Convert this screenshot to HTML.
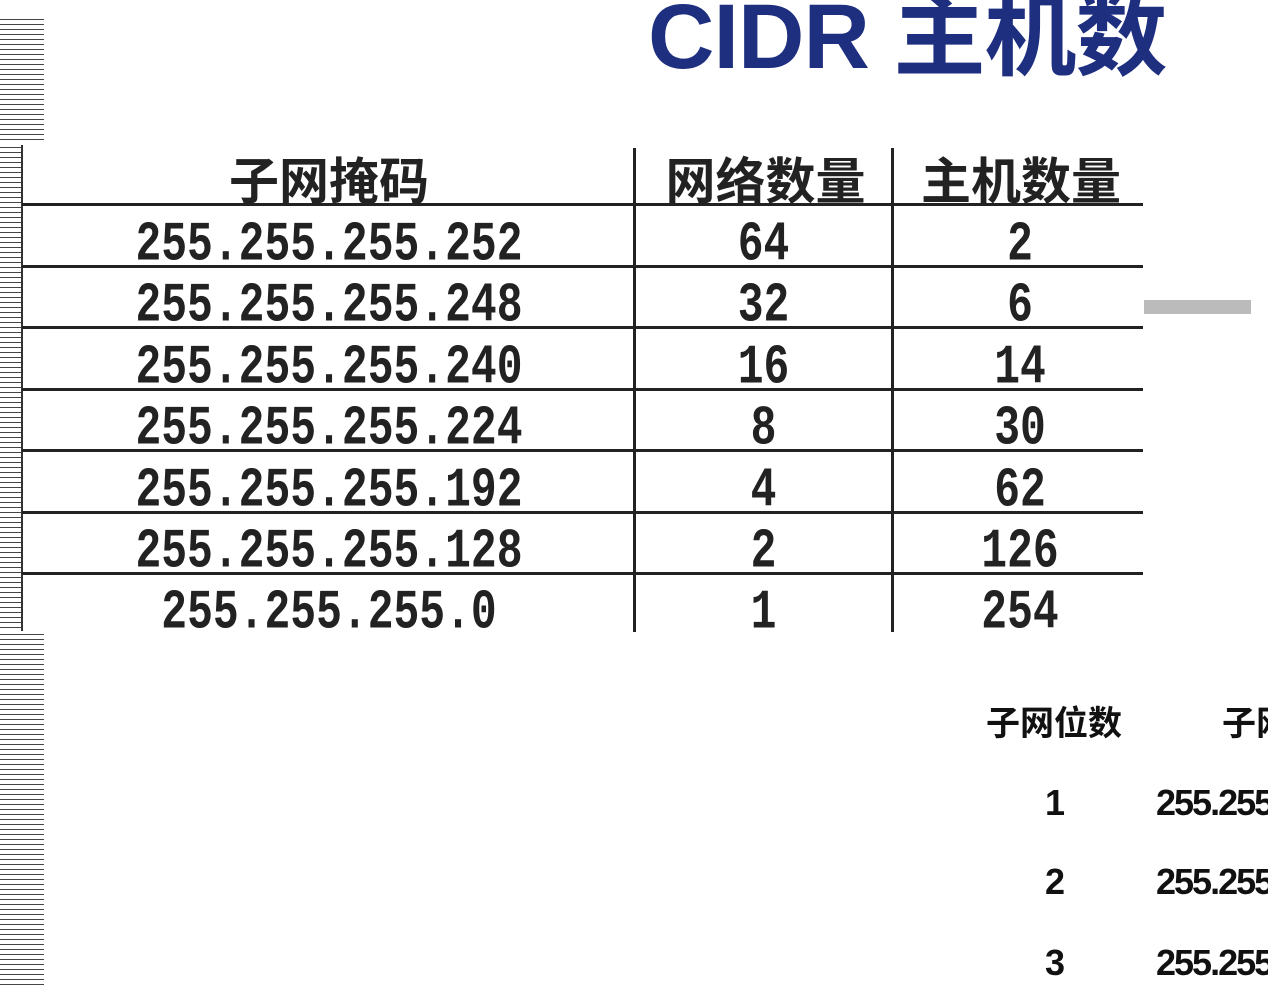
<!DOCTYPE html><html><head><meta charset="utf-8"><style>
body{margin:0;width:1280px;height:987px;background:#fff;position:relative;overflow:hidden;font-family:"Liberation Sans","Noto Sans CJK SC",sans-serif}
.a{position:absolute}
.st{background:repeating-linear-gradient(#fff 0 2px,#444 2px 3.2px,#fff 3.2px 5px)}
.hl{position:absolute;left:22px;width:1121px;height:3px;background:#222}
.vl{position:absolute;width:3px;background:#222;top:148px;height:484px}
.n{position:absolute;font-family:"Liberation Mono","DejaVu Sans Mono",monospace;font-weight:bold;font-size:43px;color:#222;transform:scaleY(1.3);transform-origin:center;text-align:center;line-height:50px;height:50px}
.h{position:absolute;font-family:"Noto Sans CJK SC",sans-serif;font-weight:bold;font-size:50px;color:#222;text-align:center;line-height:60px;top:148px}
.b{position:absolute;font-weight:bold;font-size:36px;color:#111;letter-spacing:-2px;white-space:nowrap}
</style></head><body>
<div class="a st" style="left:0;top:17px;width:44px;height:124px"></div>
<div class="a st" style="left:0;top:145px;width:21px;height:486px"></div>
<div class="a st" style="left:0;top:632px;width:44px;height:355px"></div>
<div class="a" style="left:21px;top:145px;width:2px;height:486px;background:#333"></div>
<div class="a" style="left:648px;top:-38px;font-size:92px;color:#1f2f80;white-space:nowrap;font-family:'Liberation Sans','Noto Sans CJK SC',sans-serif;font-weight:bold;letter-spacing:-1px">CIDR 主机数</div>
<div class="h" style="left:23px;width:612px">子网掩码</div>
<div class="h" style="left:638px;width:255px">网络数量</div>
<div class="h" style="left:896px;width:250px">主机数量</div>
<div class="hl" style="top:203px"></div><div class="hl" style="top:265px"></div><div class="hl" style="top:326px"></div><div class="hl" style="top:388px"></div><div class="hl" style="top:449px"></div><div class="hl" style="top:511px"></div><div class="hl" style="top:572px"></div>
<div class="vl" style="left:633px"></div><div class="vl" style="left:891px"></div>
<div class="a" style="left:1144px;top:300px;width:107px;height:14px;background:#bbb"></div>
<div class="n" style="left:23px;width:612px;top:220px">255.255.255.252</div>
<div class="n" style="left:23px;width:612px;top:281px">255.255.255.248</div>
<div class="n" style="left:23px;width:612px;top:343px">255.255.255.240</div>
<div class="n" style="left:23px;width:612px;top:404px">255.255.255.224</div>
<div class="n" style="left:23px;width:612px;top:466px">255.255.255.192</div>
<div class="n" style="left:23px;width:612px;top:527px">255.255.255.128</div>
<div class="n" style="left:23px;width:612px;top:588px">255.255.255.0</div>
<div class="n" style="left:636px;width:255px;top:220px">64</div>
<div class="n" style="left:636px;width:255px;top:281px">32</div>
<div class="n" style="left:636px;width:255px;top:343px">16</div>
<div class="n" style="left:636px;width:255px;top:404px">8</div>
<div class="n" style="left:636px;width:255px;top:466px">4</div>
<div class="n" style="left:636px;width:255px;top:527px">2</div>
<div class="n" style="left:636px;width:255px;top:588px">1</div>
<div class="n" style="left:894px;width:252px;top:220px">2</div>
<div class="n" style="left:894px;width:252px;top:281px">6</div>
<div class="n" style="left:894px;width:252px;top:343px">14</div>
<div class="n" style="left:894px;width:252px;top:404px">30</div>
<div class="n" style="left:894px;width:252px;top:466px">62</div>
<div class="n" style="left:894px;width:252px;top:527px">126</div>
<div class="n" style="left:894px;width:252px;top:588px">254</div>
<div class="b" style="left:986px;top:696px;font-size:34px;font-family:'Noto Sans CJK SC',sans-serif;letter-spacing:0">子网位数</div>
<div class="b" style="left:1222px;top:696px;font-size:34px;font-family:'Noto Sans CJK SC',sans-serif;letter-spacing:0">子网</div>
<div class="b" style="left:1045px;top:782px">1</div><div class="b" style="left:1156px;top:782px">255.255</div>
<div class="b" style="left:1045px;top:861px">2</div><div class="b" style="left:1156px;top:861px">255.255</div>
<div class="b" style="left:1045px;top:942px">3</div><div class="b" style="left:1156px;top:942px">255.255</div>
<div class="a" style="left:1268px;top:690px;width:12px;height:297px;background:#fff"></div>
</body></html>
